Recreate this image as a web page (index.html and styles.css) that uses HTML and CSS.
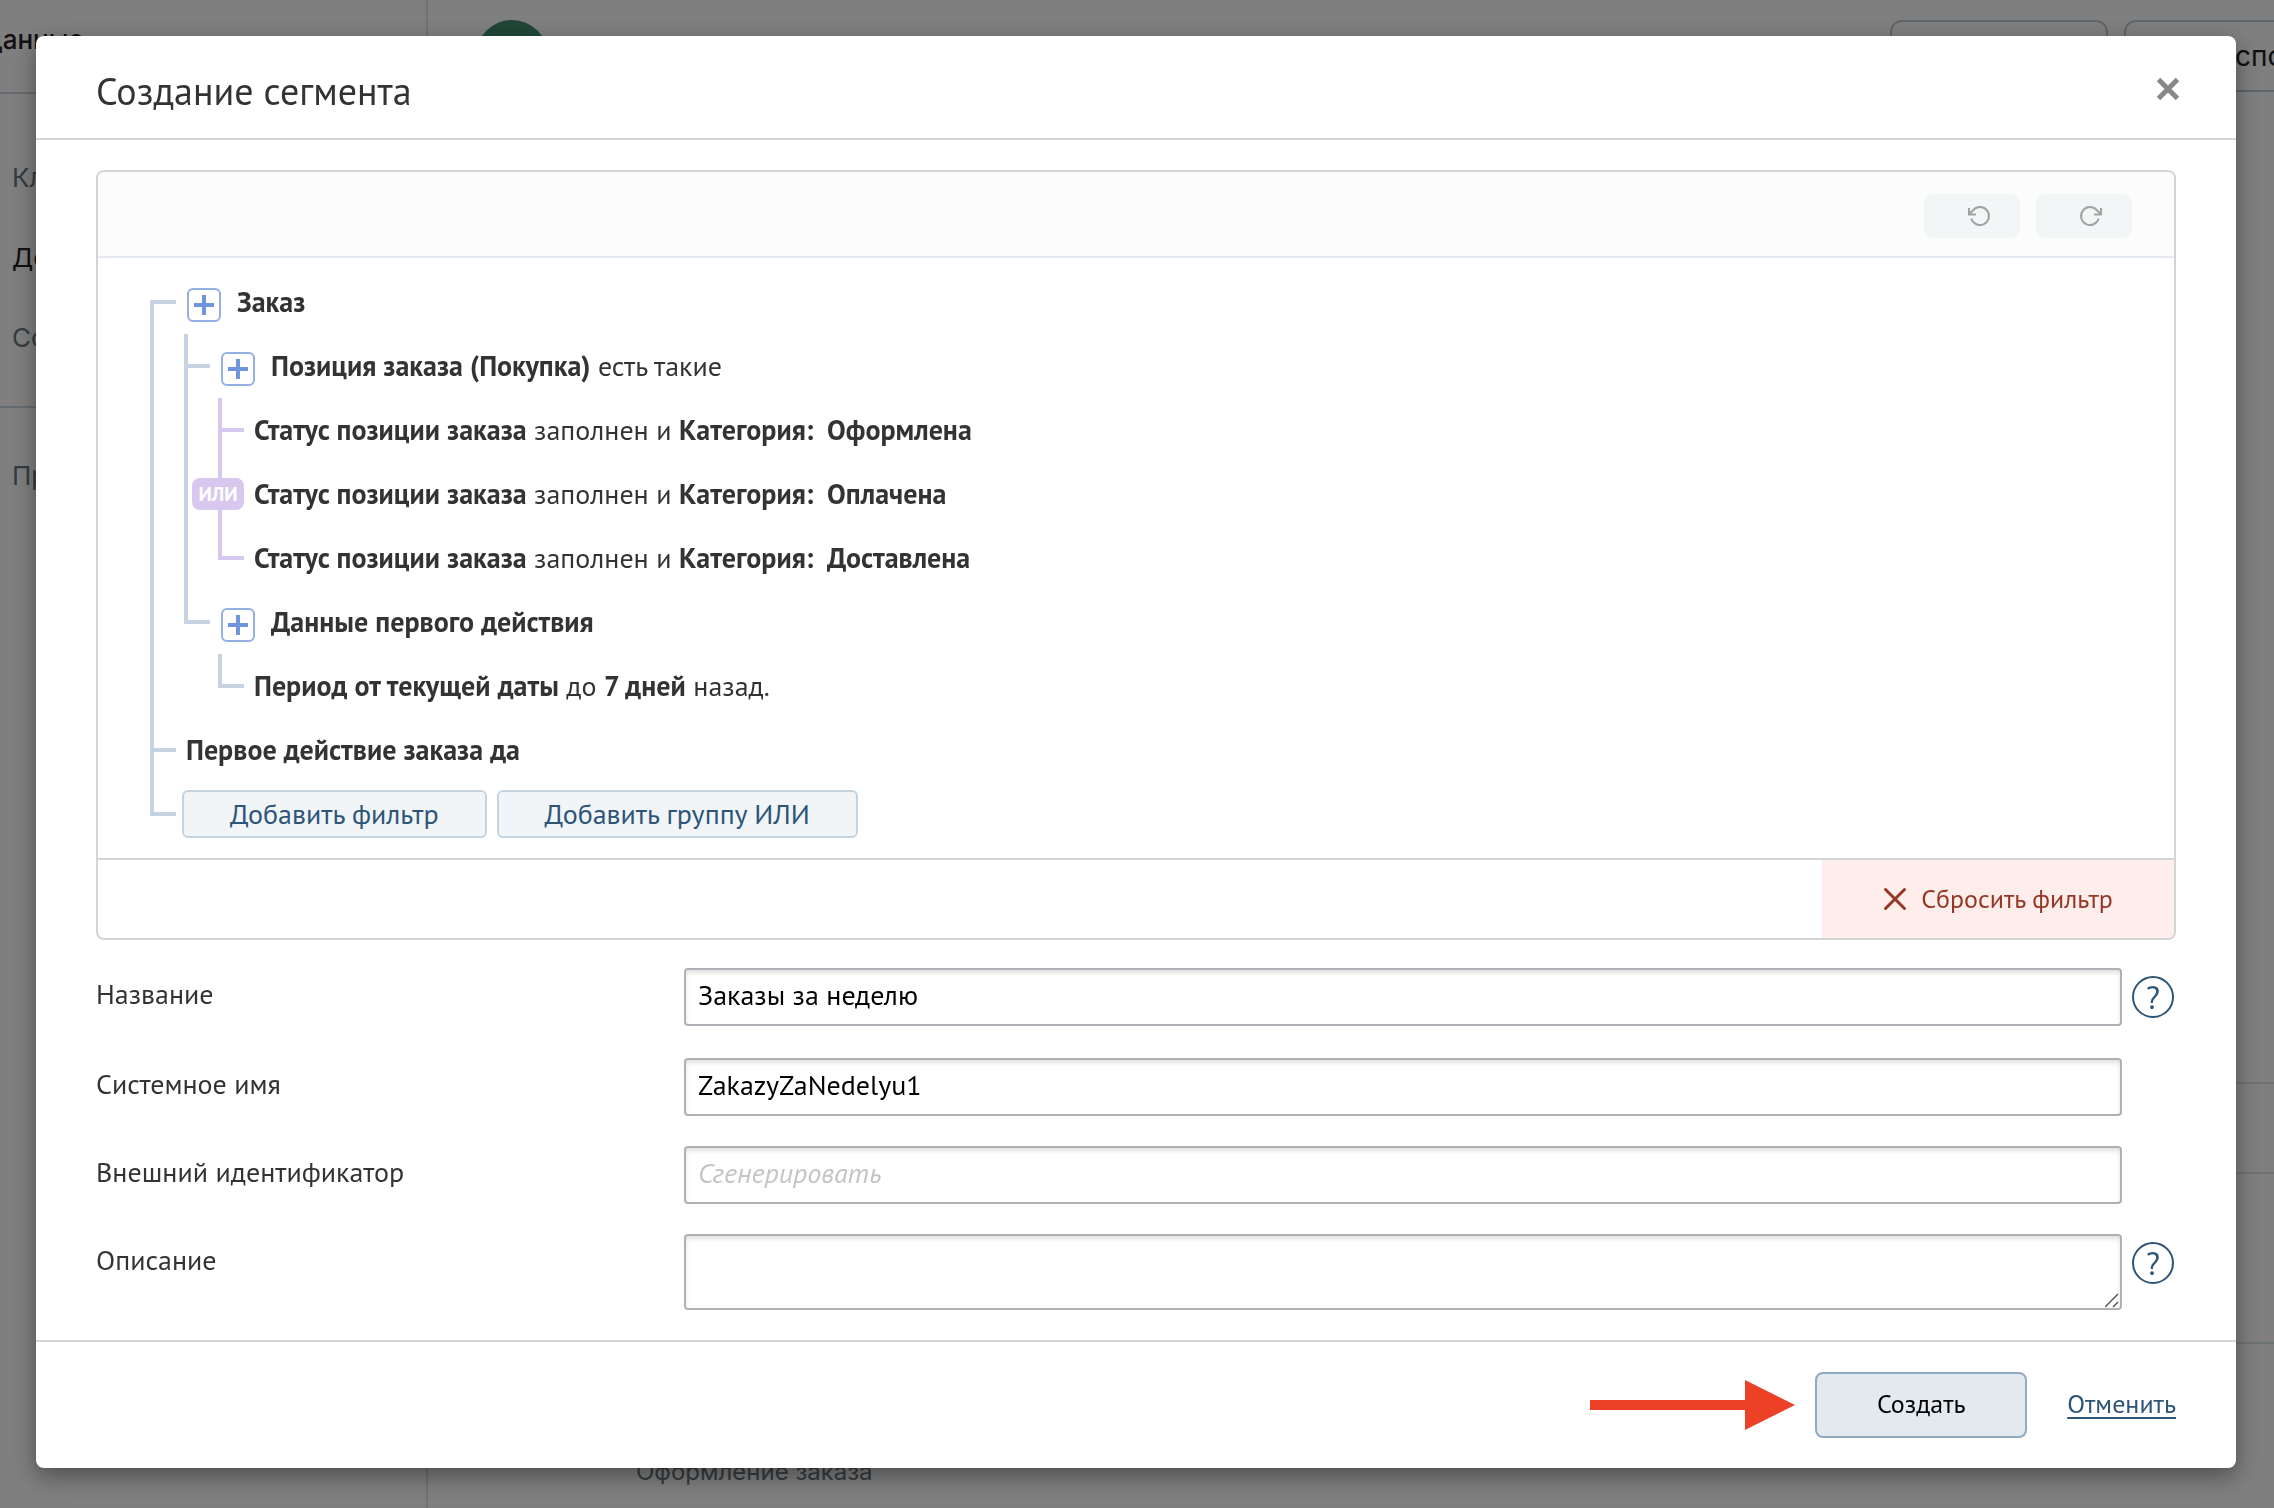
FILE: index.html
```html
<!DOCTYPE html>
<html lang="ru">
<head>
<meta charset="utf-8">
<meta name="viewport" content="width=device-width, initial-scale=1">
<title>Создание сегмента</title>
<link rel="stylesheet" href="styles.css">
</head>
<body>
<div class="app" aria-hidden="true">
  <aside class="sidebar">
    <div class="sidebar-title">данные</div>
    <nav class="sidebar-group">
      <span class="sidebar-item">Клиент</span>
      <span class="sidebar-item sidebar-item--active">Доход</span>
      <span class="sidebar-item">События</span>
    </nav>
    <nav class="sidebar-group">
      <span class="sidebar-item">Про</span>
    </nav>
  </aside>
  <div class="page">
    <div class="page-head">
      <span class="avatar"></span>
      <span class="page-actions">
        <span class="page-action"></span>
        <span class="page-action page-action--export">Экспорт</span>
      </span>
    </div>
    <div class="page-row page-row--tall"></div>
    <div class="page-row page-row--short"></div>
    <div class="page-row"></div>
    <div class="page-caption">Оформление заказа</div>
  </div>
</div>

<div class="overlay">
  <form class="modal" role="dialog" aria-labelledby="modal-title">
    <header class="modal-header">
      <h1 class="modal-title" id="modal-title">Создание сегмента</h1>
      <button class="close" type="button" aria-label="Закрыть">
        <svg width="24" height="24" viewBox="0 0 24 24"><path d="M2.500 2.500L21.500 21.500M21.500 2.500L2.500 21.500" stroke="#888" stroke-width="5" fill="none"/></svg>
      </button>
    </header>

    <div class="modal-body">
      <section class="panel">
        <div class="toolbar">
          <button class="tool" type="button" aria-label="Отменить действие">
            <svg width="24" height="24" viewBox="0 0 24 24"><path d="M4.300 14.500A9 9 0 1 0 6.300 6L2.500 9.800M2 4V10.500H9" stroke="#a3a3a3" stroke-width="2" fill="none"/></svg>
          </button>
          <button class="tool" type="button" aria-label="Повторить действие">
            <svg width="24" height="24" viewBox="0 0 24 24"><path d="M19.700 14.500A9 9 0 1 1 17.700 6L21.500 9.800M22 4V10.500H15" stroke="#a3a3a3" stroke-width="2" fill="none"/></svg>
          </button>
        </div>

        <ul class="tree">
          <li class="node">
            <div class="row">
              <button class="plus" type="button" aria-label="Добавить условие"></button>
              <span><b>Заказ</b></span>
            </div>
            <ul class="branch">
              <li class="node">
                <div class="row">
                  <button class="plus" type="button" aria-label="Добавить условие"></button>
                  <span><b>Позиция заказа (Покупка)</b> есть такие</span>
                </div>
                <ul class="branch branch--or">
                  <li class="node"><div class="row"><span><b>Статус позиции заказа</b> заполнен и <b>Категория:&nbsp; Оформлена</b></span></div></li>
                  <li class="node"><span class="or">ИЛИ</span><div class="row"><span><b>Статус позиции заказа</b> заполнен и <b>Категория:&nbsp; Оплачена</b></span></div></li>
                  <li class="node"><div class="row"><span><b>Статус позиции заказа</b> заполнен и <b>Категория:&nbsp; Доставлена</b></span></div></li>
                </ul>
              </li>
              <li class="node">
                <div class="row">
                  <button class="plus" type="button" aria-label="Добавить условие"></button>
                  <span><b>Данные первого действия</b></span>
                </div>
                <ul class="branch">
                  <li class="node"><div class="row"><span><b>Период от текущей даты</b> до <b>7 дней</b> назад.</span></div></li>
                </ul>
              </li>
            </ul>
          </li>
          <li class="node"><div class="row"><span><b>Первое действие заказа да</b></span></div></li>
          <li class="node">
            <div class="row row--actions">
              <button class="add" type="button">Добавить фильтр</button>
              <button class="add" type="button">Добавить группу ИЛИ</button>
            </div>
          </li>
        </ul>

        <div class="panel-footer">
          <button class="reset" type="button">
            <svg width="24" height="24" viewBox="0 0 24 24"><path d="M2.500 2.500L21.500 21.500M21.500 2.500L2.500 21.500" stroke="#963624" stroke-width="3" stroke-linecap="round" fill="none"/></svg>
            Сбросить фильтр
          </button>
        </div>
      </section>

      <div class="field field--help">
        <label class="label" for="name">Название</label>
        <input class="input" id="name" type="text" value="Заказы за неделю">
        <button class="help" type="button" aria-label="Справка: название">?</button>
      </div>
      <div class="field">
        <label class="label" for="system-name">Системное имя</label>
        <input class="input" id="system-name" type="text" value="ZakazyZaNedelyu1">
      </div>
      <div class="field">
        <label class="label" for="external-id">Внешний идентификатор</label>
        <input class="input" id="external-id" type="text" placeholder="Сгенерировать">
      </div>
      <div class="field field--help">
        <label class="label" for="description">Описание</label>
        <textarea class="input input--area" id="description"></textarea>
        <button class="help" type="button" aria-label="Справка: описание">?</button>
      </div>
    </div>

    <footer class="modal-footer">
      <svg class="arrow" width="206" height="50" viewBox="0 0 206 50" aria-hidden="true"><path d="M0 20H155V0L205 25L155 50V30H0Z" fill="#ec4127"/></svg>
      <button class="submit" type="submit">Создать</button>
      <a class="cancel" href="#">Отменить</a>
    </footer>
  </form>
</div>
</body>
</html>
```
FILE: styles.css
```css
*, *::before, *::after { box-sizing: border-box; }

body {
  margin: 0;
  font: 28px/32px "PT Sans", Lato, "Noto Sans", sans-serif;
  color: #333;
}

button, input, textarea { font: inherit; color: inherit; margin: 0; }
button { padding: 0; border: 0; background: none; cursor: pointer; }
ul { list-style: none; margin: 0; padding: 0; }
svg { display: block; flex: none; }

/* Page under the dialog */
.app {
  display: flex;
  height: 100vh;
  overflow: hidden;
  background: #fff;
  font-family: Inter, "Noto Sans", sans-serif;
  font-size: 26px;
}
.sidebar { width: 428px; flex: none; border-right: 2px solid #dbe4ea; }
.sidebar-title {
  height: 94px;
  padding-top: 24px;
  margin-left: -14px;
  font-weight: 500;
  color: #222;
  border-bottom: 2px solid #c9d5de;
}
.sidebar-group {
  display: flex;
  flex-direction: column;
  gap: 48px;
  padding: 68px 12px 52px;
  border-bottom: 2px solid #c9d5de;
}
.sidebar-group:last-child { padding-top: 52px; border: 0; }
.sidebar-item { color: #6b7780; }
.sidebar-item--active { color: #222; }
.page { flex: 1; min-width: 0; color: #6b7780; }
.page-head {
  display: flex;
  justify-content: space-between;
  height: 114px;
  padding: 20px 0 0 48px;
}
.avatar { width: 72px; height: 72px; border-radius: 50%; background: #3f8e6c; }
.page-actions { display: flex; gap: 16px; margin-right: -82px; }
.page-action {
  width: 218px;
  height: 72px;
  border: 2px solid #bccad4;
  border-radius: 12px;
}
.page-action--export {
  width: 232px;
  padding-left: 74px;
  font-size: 28px;
  line-height: 68px;
  color: #222;
}
.page-row { height: 170px; border-bottom: 2px solid #dbe4ea; }
.page-row--tall { height: 970px; }
.page-row--short { height: 90px; }
.page-caption { padding: 112px 0 0 208px; font-size: 24px; }

/* Dialog */
.overlay {
  position: fixed;
  inset: 0;
  padding: 36px 38px 40px 36px;
  overflow: auto;
  background: rgba(0, 0, 0, .5);
}
.modal {
  background: #fff;
  border-radius: 8px;
  box-shadow: 0 8px 24px rgba(0, 0, 0, .4);
}
.modal-header {
  display: flex;
  align-items: center;
  justify-content: space-between;
  height: 104px;
  padding: 4px 56px 0 60px;
  border-bottom: 2px solid #d4d4d4;
}
.modal-title { margin: 0; padding-top: 4px; font-size: 38px; line-height: 40px; font-weight: 400; }
.modal-body { padding: 30px 60px; }

/* Filter panel */
.panel {
  border: 2px solid #d4d4d4;
  border-radius: 8px;
  overflow: hidden;
}
.toolbar {
  display: flex;
  justify-content: flex-end;
  gap: 16px;
  padding: 22px 42px 18px;
  background: #fcfcfc;
  border-bottom: 2px solid #e3e9ee;
}
.tool {
  display: flex;
  align-items: center;
  justify-content: center;
  width: 96px;
  height: 44px;
  padding-left: 14px;
  border-radius: 8px;
  background: #f2f6f7;
}

.tree { --line: #c5d3e2; padding: 12px 52px; }
.branch { --line: #c5d3e2; }
.branch--or { --line: #d8c7ee; }
.node { position: relative; padding-left: 34px; }
.node::before {
  content: "";
  position: absolute;
  left: 0;
  top: 0;
  bottom: 0;
  width: 4px;
  background: var(--line);
}
.node::after {
  content: "";
  position: absolute;
  left: 0;
  top: 30px;
  width: 26px;
  height: 4px;
  background: var(--line);
}
.node:last-child::before { bottom: auto; height: 34px; }
.tree > .node:first-child::before { top: 30px; }
.row {
  display: flex;
  align-items: center;
  gap: 16px;
  height: 64px;
  padding-left: 2px;
}
.row--actions { gap: 10px; padding: 0; margin-left: -2px; }
.plus {
  width: 34px;
  height: 34px;
  margin: 6px 0 0 1px;
  border: 2px solid #93b0e6;
  border-radius: 6px;
  background:
    linear-gradient(#6f96dc, #6f96dc) center / 20px 4px no-repeat,
    linear-gradient(#6f96dc, #6f96dc) center / 4px 20px no-repeat;
}
.or {
  position: absolute;
  z-index: 1;
  left: -26px;
  top: 16px;
  width: 52px;
  border-radius: 8px;
  background: #d8c7ee;
  color: #fff;
  font-size: 20px;
  font-weight: 700;
  text-align: center;
}
.add {
  height: 48px;
  padding: 0 46px;
  border: 2px solid #c5d3df;
  border-radius: 6px;
  background: #f1f5f8;
  color: #2e5478;
}
.panel-footer {
  display: flex;
  justify-content: flex-end;
  border-top: 2px solid #d4d4d4;
}
.reset {
  display: flex;
  align-items: center;
  justify-content: center;
  gap: 14px;
  width: 352px;
  height: 78px;
  background: #fdeeeb;
  color: #963624;
  font-size: 26px;
}

/* Fields */
.field {
  display: grid;
  grid-template-columns: 578px 1fr 44px;
  column-gap: 10px;
  align-items: start;
  min-height: 60px;
  margin-top: 28px;
}
.field--help { min-height: 62px; }
.label { padding-top: 10px; }
.input {
  width: 100%;
  height: 58px;
  padding: 0 12px 6px;
  border: 2px solid #b0b0b6;
  border-radius: 4px;
  background: #fff;
  box-shadow: inset 0 3px 4px rgba(0, 0, 0, .12);
  color: #000;
}
.input::placeholder { color: #c4c4c4; font-style: italic; opacity: 1; }
.input--area { display: block; height: 76px; padding-top: 8px; resize: vertical; }
.input--area::-webkit-resizer {
  background: url("data:image/svg+xml,%3Csvg xmlns='http://www.w3.org/2000/svg' width='15' height='15'%3E%3Cpath d='M0 14L13 1M8 14L13 9' stroke='%23555' stroke-width='1.500' fill='none'/%3E%3C/svg%3E") no-repeat;
}
.help {
  width: 42px;
  height: 42px;
  margin-top: 8px;
  border: 2px solid #2e5478;
  border-radius: 50%;
  color: #2e5478;
  font-size: 32px;
}

.modal-footer {
  display: flex;
  align-items: center;
  justify-content: flex-end;
  padding: 30px 60px;
  border-top: 2px solid #d4d4d4;
  font-size: 26px;
}
.arrow { margin-right: 19px; }
.submit {
  width: 212px;
  height: 66px;
  padding-bottom: 2px;
  margin-right: 40px;
  border: 2px solid #91aac2;
  border-radius: 8px;
  background: #e2e9ef;
  color: #000;
}
.cancel { padding-bottom: 2px; color: #2e5478; text-underline-offset: 4px; }
```
